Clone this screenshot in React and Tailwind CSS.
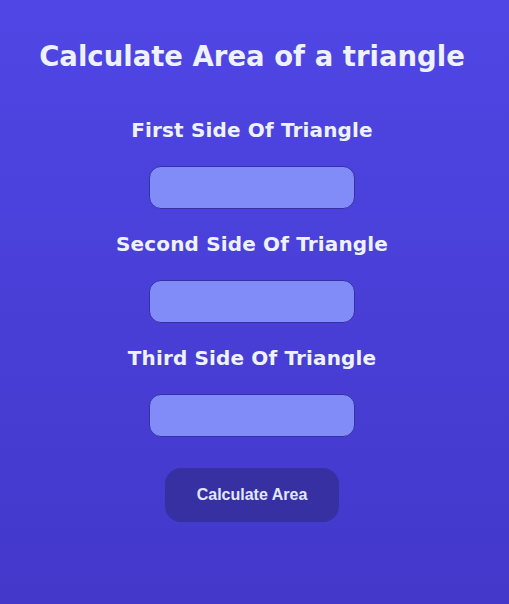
export default function App() {
  const labels = ["First Side Of Triangle", "Second Side Of Triangle", "Third Side Of Triangle"];
  return (
    <div className="w-full h-[604px] bg-gradient-to-b from-[#4f46e5] to-[#4338ca] flex flex-col items-center pt-[38px] pr-[5px] text-[#eef2ff]">
      <h1 className="text-[27.5px] leading-[36px] font-bold" style={{ fontFamily: '"DejaVu Sans", sans-serif' }}>
        Calculate Area of a triangle
      </h1>
      <div className="flex flex-col items-center mt-[42px]">
        {labels.map((l) => (
          <div key={l} className="flex flex-col items-center mb-[21px]">
            <div className="text-[20px] leading-[28px] font-bold tracking-[0.15px]" style={{ fontFamily: '"DejaVu Sans", sans-serif' }}>{l}</div>
            <input className="mt-[22px] w-[206px] h-[43px] rounded-xl bg-[#818cf8] border border-[#3730a3] outline-none" />
          </div>
        ))}
      </div>
      <button className="mt-[10px] w-[174px] h-[54px] rounded-2xl bg-[#3730a3] text-[#e0e7ff] text-[16px] font-bold" style={{ fontFamily: '"Liberation Sans", Arial, sans-serif' }}>
        Calculate Area
      </button>
    </div>
  );
}
